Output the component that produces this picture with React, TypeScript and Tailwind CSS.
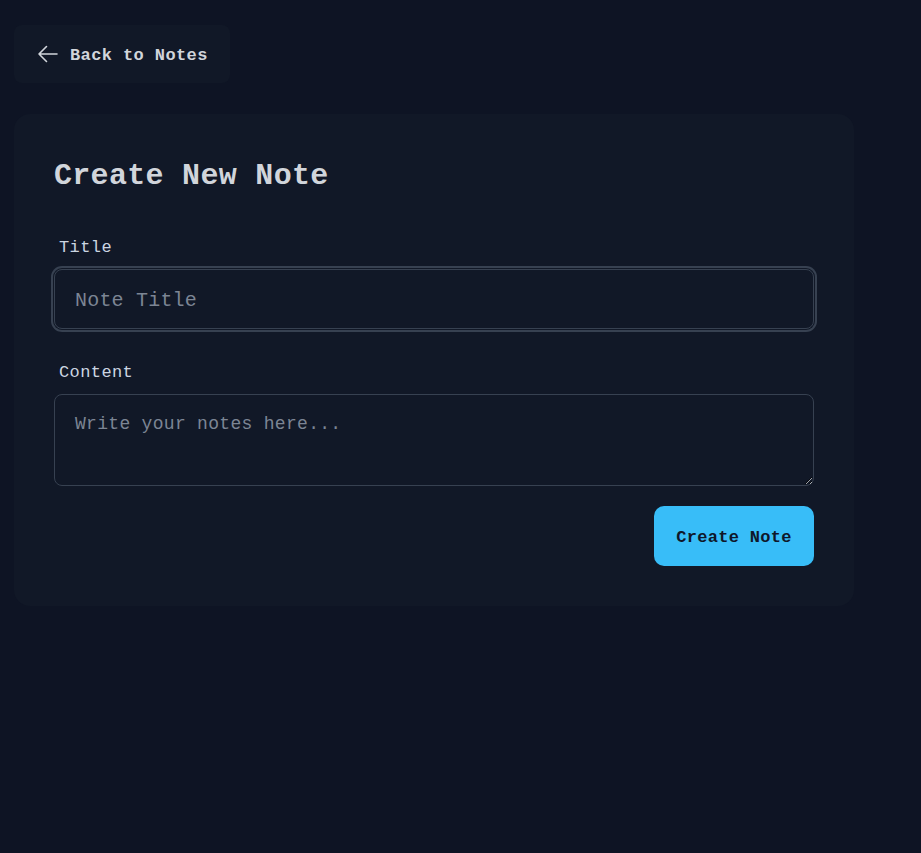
import React from "react";

export default function App() {
  const mono = { fontFamily: '"Liberation Mono", "DejaVu Sans Mono", monospace' };
  return (
    <div className="min-h-[853px] w-full bg-[#0e1424] pl-[14px] pt-[25px]" style={mono}>
      <button className="flex h-[58px] w-[216px] items-center gap-[10px] rounded-lg bg-[#111827] pl-[22px] pt-[3px] text-[17px] font-bold tracking-[0.4px] text-[#d1d5db]">
        <svg width="24" height="24" viewBox="0 0 24 24" fill="none" stroke="currentColor" strokeWidth="1.6" strokeLinecap="round" strokeLinejoin="round" className="-mt-[3px]">
          <path d="M10.5 19.5 3 12m0 0 7.5-7.5M3 12h18" />
        </svg>
        <span>Back to Notes</span>
      </button>

      <div className="mt-[31px] w-[840px] rounded-2xl bg-[#111827] p-10">
        <h1 className="text-[30px] font-bold leading-[44px] tracking-[0.3px] text-[#d1d5db]">Create New Note</h1>

        <label className="mt-[38px] mb-[9px] block pl-[5px] text-[17px] leading-6 tracking-[0.4px] text-[#cbd5e1]">Title</label>
        <input
          autoFocus
          placeholder="Note Title"
          className="block h-[60px] w-full rounded-lg border border-[#374151] bg-[#111827] px-5 pt-[3px] text-[20px] tracking-[0.2px] text-[#d1d5db] caret-[#cbd5e1] outline-none ring-2 ring-[#374151] ring-offset-1 ring-offset-[#111827] placeholder:text-[#7c8594]"
          style={mono}
        />

        <label className="mt-[32px] mb-[9px] block pl-[5px] text-[17px] leading-6 tracking-[0.4px] text-[#cbd5e1]">Content</label>
        <textarea
          placeholder="Write your notes here..."
          className="block h-[92px] w-full rounded-lg border border-[#374151] bg-[#111827] px-5 pt-[17px] text-[18px] leading-6 tracking-[0.3px] text-[#d1d5db] outline-none placeholder:text-[#7c8594]"
          style={mono}
        />

        <div className="mt-5 flex justify-end">
          <button className="h-[60px] w-[160px] rounded-[10px] bg-[#38bdf8] pt-[3px] text-[17px] font-bold tracking-[0.3px] text-[#0f172a]">
            Create Note
          </button>
        </div>
      </div>
    </div>
  );
}
